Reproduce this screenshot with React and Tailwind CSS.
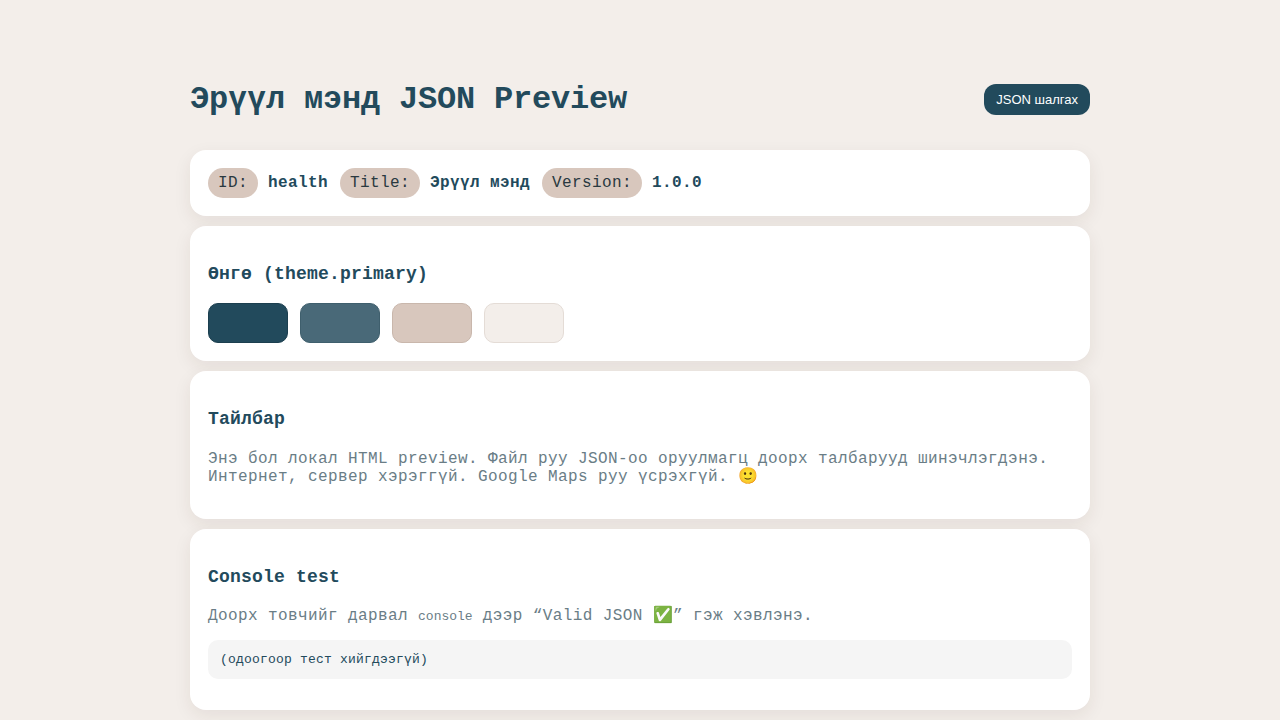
import React from 'react'

const swatches = [
    { id: 1, cls: 'bg-[#224a5c] border-[#1c3f4f]' },
    { id: 2, cls: 'bg-[#496978] border-[#3f5f6d]' },
    { id: 3, cls: 'bg-[#d8c7bd] border-[#c9b7ac]' },
    { id: 4, cls: 'bg-[#f3eeea] border-[#e4dcd6]' },
]

const Card = ({ children }) => (
    <div className='bg-white rounded-2xl p-[18px] shadow-[0_6px_18px_rgba(60,40,30,0.08)]'>
        {children}
    </div>
)

const Pill = ({ children }) => (
    <span className='bg-[#d8c7bd] text-[#2a3940] rounded-full px-[10px] h-[30px] flex items-center mr-[10px]'>{children}</span>
)

const App = () => {
    return (
        <div className="min-h-screen bg-[#f3eeea] text-[#224a5c] font-['Liberation_Mono',monospace] tracking-[0.4px]">
            <div className='w-[900px] mx-auto pt-[84px] pb-10 flex flex-col gap-[10px]'>
                <div className='flex items-center justify-between mb-[25px]'>
                    <h1 className='text-[32px] font-bold leading-[31px] tracking-[-0.2px]'>Эрүүл мэнд JSON Preview</h1>
                    <button className="bg-[#224a5c] text-white text-[13px] tracking-normal font-['Liberation_Sans',sans-serif] rounded-xl px-3 h-[31px]">JSON шалгах</button>
                </div>

                <Card>
                    <div className='flex items-center text-base'>
                        <Pill>ID:</Pill>
                        <b className='mr-3'>health</b>
                        <Pill>Title:</Pill>
                        <b className='mr-3'>Эрүүл мэнд</b>
                        <Pill>Version:</Pill>
                        <b>1.0.0</b>
                    </div>
                </Card>

                <Card>
                    <h2 className='text-lg font-bold leading-[21px] tracking-[0.2px] mt-5 mb-[18px]'>Өнгө (theme.primary)</h2>
                    <div className='flex gap-3'>
                        {swatches.map((s) => (
                            <div key={s.id} className={`w-20 h-10 rounded-[10px] border ${s.cls}`} />
                        ))}
                    </div>
                </Card>

                <Card>
                    <h2 className='text-lg font-bold leading-[21px] tracking-[0.2px] mt-5 mb-5'>Тайлбар</h2>
                    <p className='text-base text-[#6a7d86] leading-[18px] mb-[15px]'>
                        Энэ бол локал HTML preview. Файл руу JSON-оо оруулмагц доорх талбарууд шинэчлэгдэнэ. Интернет, сервер хэрэггүй. Google Maps руу үсрэхгүй. 🙂
                    </p>
                </Card>

                <Card>
                    <h2 className='text-lg font-bold leading-[21px] tracking-[0.2px] mt-5 mb-[19px]'>Console test</h2>
                    <p className='text-base text-[#6a7d86] leading-[18px]'>
                        Доорх товчийг дарвал <code className='text-[13px] tracking-normal'>console</code> дээр “Valid JSON ✅” гэж хэвлэнэ.
                    </p>
                    <pre className='mt-[14px] mb-[13px] bg-[#f5f5f5] rounded-[10px] px-3 py-3 text-[13px] leading-[15px] tracking-[0.2px] text-[#224a5c]'>(одоогоор тест хийгдээгүй)</pre>
                </Card>
            </div>
        </div>
    )
}

export default App
